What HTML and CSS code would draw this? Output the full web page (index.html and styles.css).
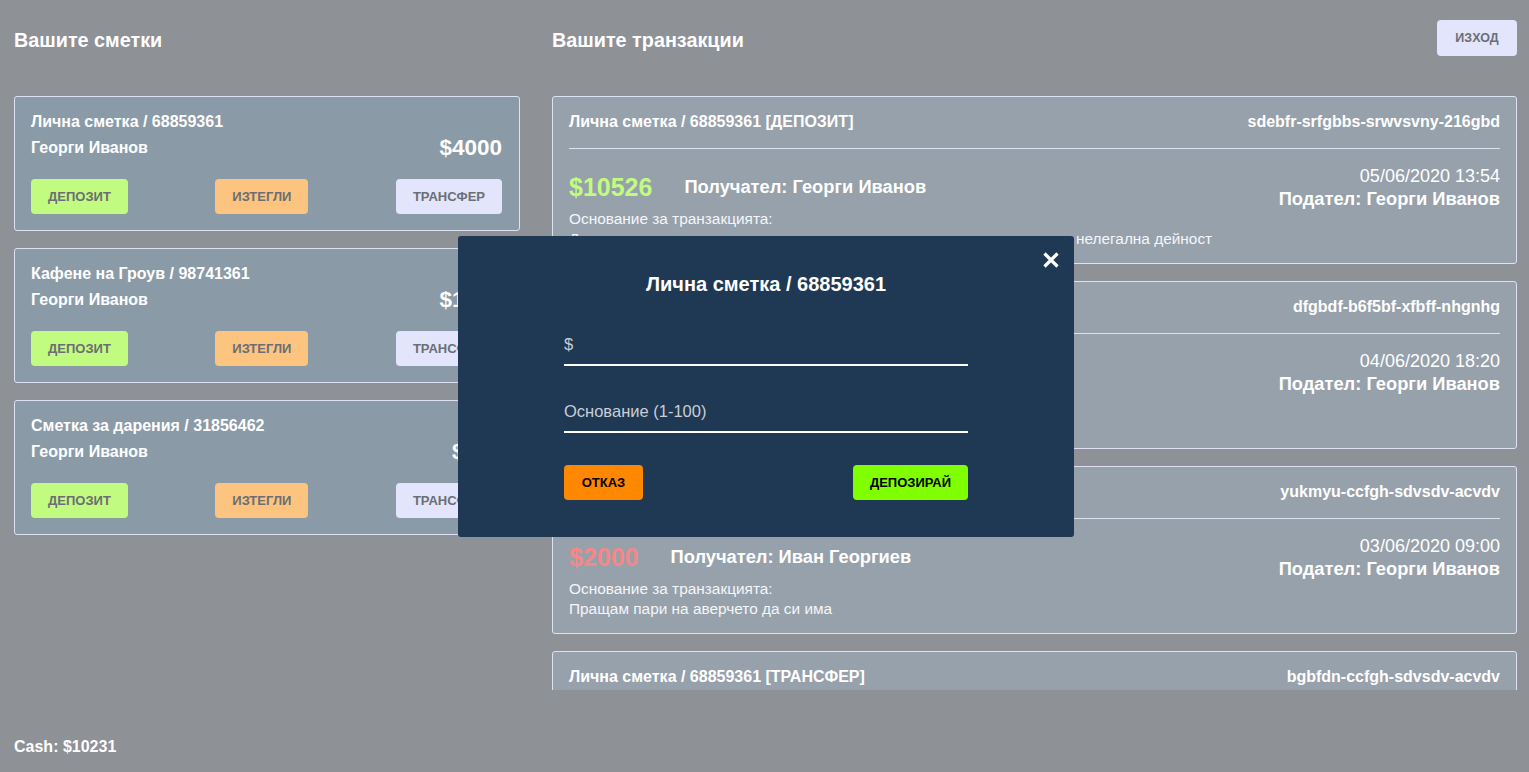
FILE: index.html
```html
<!DOCTYPE html>
<html lang="bg">
<head>
<meta charset="utf-8">
<title>Банка</title>
<link rel="stylesheet" href="styles.css">
</head>
<body>
<div class="page">
  <main class="columns">
    <section class="col col-accounts">
      <header class="col-head">
        <h2 class="col-title">Вашите сметки</h2>
      </header>
      <div class="account-list">
        <article class="account">
          <div class="account-title">Лична сметка / 68859361</div>
          <div class="account-row">
            <span class="account-owner">Георги Иванов</span>
            <span class="account-balance">$4000</span>
          </div>
          <div class="account-actions">
            <button class="btn btn-green">Депозит</button>
            <button class="btn btn-orange">Изтегли</button>
            <button class="btn btn-lav">Трансфер</button>
          </div>
        </article>
        <article class="account">
          <div class="account-title">Кафене на Гроув / 98741361</div>
          <div class="account-row">
            <span class="account-owner">Георги Иванов</span>
            <span class="account-balance">$1900</span>
          </div>
          <div class="account-actions">
            <button class="btn btn-green">Депозит</button>
            <button class="btn btn-orange">Изтегли</button>
            <button class="btn btn-lav">Трансфер</button>
          </div>
        </article>
        <article class="account">
          <div class="account-title">Сметка за дарения / 31856462</div>
          <div class="account-row">
            <span class="account-owner">Георги Иванов</span>
            <span class="account-balance">$500</span>
          </div>
          <div class="account-actions">
            <button class="btn btn-green">Депозит</button>
            <button class="btn btn-orange">Изтегли</button>
            <button class="btn btn-lav">Трансфер</button>
          </div>
        </article>
      </div>
    </section>

    <section class="col col-tx">
      <header class="col-head">
        <h2 class="col-title">Вашите транзакции</h2>
        <button class="btn btn-lav btn-logout">Изход</button>
      </header>
      <div class="tx-list">
        <article class="tx">
          <div class="tx-head">
            <span>Лична сметка / 68859361 [ДЕПОЗИТ]</span>
            <span>sdebfr-srfgbbs-srwvsvny-216gbd</span>
          </div>
          <div class="tx-main">
            <div class="tx-left">
              <span class="tx-amount tx-plus">$10526</span>
              <span class="tx-party">Получател: Георги Иванов</span>
            </div>
            <div class="tx-right">
              <span class="tx-date">05/06/2020 13:54</span>
              <span class="tx-party">Подател: Георги Иванов</span>
            </div>
          </div>
          <div class="tx-desc">
            <div>Основание за транзакцията:</div>
            <div>Депозирам пари намерени на улицата, които са с вероятност да са от нелегална дейност</div>
          </div>
        </article>
        <article class="tx">
          <div class="tx-head">
            <span>Лична сметка / 68859361 [ИЗТЕГЛЯНЕ]</span>
            <span>dfgbdf-b6f5bf-xfbff-nhgnhg</span>
          </div>
          <div class="tx-main">
            <div class="tx-left">
              <span class="tx-amount tx-minus">$500</span>
              <span class="tx-party">Получател: Георги Иванов</span>
            </div>
            <div class="tx-right">
              <span class="tx-date">04/06/2020 18:20</span>
              <span class="tx-party">Подател: Георги Иванов</span>
            </div>
          </div>
          <div class="tx-desc">
            <div>Основание за транзакцията:</div>
            <div>Теглене на пари в брой</div>
          </div>
        </article>
        <article class="tx">
          <div class="tx-head">
            <span>Лична сметка / 68859361 [ТРАНСФЕР]</span>
            <span>yukmyu-ccfgh-sdvsdv-acvdv</span>
          </div>
          <div class="tx-main">
            <div class="tx-left">
              <span class="tx-amount tx-minus">$2000</span>
              <span class="tx-party">Получател: Иван Георгиев</span>
            </div>
            <div class="tx-right">
              <span class="tx-date">03/06/2020 09:00</span>
              <span class="tx-party">Подател: Георги Иванов</span>
            </div>
          </div>
          <div class="tx-desc">
            <div>Основание за транзакцията:</div>
            <div>Пращам пари на аверчето да си има</div>
          </div>
        </article>
        <article class="tx">
          <div class="tx-head">
            <span>Лична сметка / 68859361 [ТРАНСФЕР]</span>
            <span>bgbfdn-ccfgh-sdvsdv-acvdv</span>
          </div>
          <div class="tx-main">
            <div class="tx-left">
              <span class="tx-amount tx-minus">$1000</span>
              <span class="tx-party">Получател: Иван Георгиев</span>
            </div>
            <div class="tx-right">
              <span class="tx-date">02/06/2020 10:00</span>
              <span class="tx-party">Подател: Георги Иванов</span>
            </div>
          </div>
          <div class="tx-desc">
            <div>Основание за транзакцията:</div>
            <div>Заем</div>
          </div>
        </article>
      </div>
    </section>
  </main>
  <footer class="cash">Cash: $10231</footer>
</div>

<div class="overlay">
  <div class="modal">
    <button class="modal-close" aria-label="Затвори">
      <svg width="18" height="18" viewBox="0 0 18 18"><path d="M2.5 2.5 L15.5 15.5 M15.5 2.5 L2.5 15.5" stroke="#ffffff" stroke-width="3.2" stroke-linecap="butt" fill="none"/></svg>
    </button>
    <h3 class="modal-title">Лична сметка / 68859361</h3>
    <form class="modal-form">
      <input class="field" type="text" placeholder="$">
      <input class="field" type="text" placeholder="Основание (1-100)">
      <div class="modal-actions">
        <button type="button" class="btn btn-cancel">Отказ</button>
        <button type="button" class="btn btn-confirm">Депозирай</button>
      </div>
    </form>
  </div>
</div>
</body>
</html>
```
FILE: styles.css
```css
* { box-sizing: border-box; }

html, body {
  margin: 0;
  padding: 0;
  height: 100%;
}

body {
  background: #8e9196;
  font-family: "Liberation Sans", Arial, sans-serif;
  color: #ffffff;
  overflow: hidden;
}

.page {
  height: 100vh;
  display: flex;
  flex-direction: column;
}

.columns {
  display: grid;
  grid-template-columns: 506px 1fr;
  column-gap: 32px;
  padding: 0 12px 0 14px;
  height: 690px;
}

.col {
  display: flex;
  flex-direction: column;
  min-height: 0;
}

.col-head {
  height: 78px;
  margin-bottom: 18px;
  display: flex;
  align-items: center;
  justify-content: space-between;
  padding-top: 2px;
}

.col-title {
  margin: 0;
  font-size: 19.8px;
  font-weight: bold;
  line-height: 24px;
}

/* Buttons */
.btn {
  font-family: "Liberation Sans", Arial, sans-serif;
  border: none;
  border-radius: 4px;
  height: 35px;
  padding: 0 17px;
  font-size: 13px;
  font-weight: bold;
  text-transform: uppercase;
  color: #6b6e74;
  cursor: pointer;
}

.btn-green { background: #c1fb80; }
.btn-orange { background: #fdc47f; }
.btn-lav { background: #e2e5fb; }

.btn-logout {
  width: 80px;
  height: 36px;
  padding: 0;
  font-size: 12.5px;
  margin-top: -4px;
}

/* Accounts */
.account-list {
  display: flex;
  flex-direction: column;
  gap: 17px;
}

.account {
  background: #8b9aa7;
  border: 1px solid #dde1f6;
  border-radius: 3px;
  padding: 16px 17px 16px 16px;
}

.account-title {
  font-size: 16px;
  font-weight: bold;
  line-height: 18px;
}

.account-row {
  display: flex;
  justify-content: space-between;
  align-items: center;
  height: 30px;
  margin-top: 2px;
}

.account-owner {
  font-size: 16px;
  font-weight: bold;
}

.account-balance {
  font-size: 22.5px;
  font-weight: bold;
}

.account-actions {
  display: flex;
  justify-content: space-between;
  margin-top: 16px;
}

/* Transactions */
.tx-list {
  display: flex;
  flex-direction: column;
  gap: 17px;
  overflow: hidden;
  flex: 1;
  min-height: 0;
}

.tx {
  flex-shrink: 0;
  background: #97a1ab;
  border: 1px solid #dde1f6;
  border-radius: 3px;
  padding: 16px 16px 14px 16px;
}

.tx-head {
  display: flex;
  justify-content: space-between;
  font-size: 16px;
  font-weight: bold;
  line-height: 18px;
  padding-bottom: 17px;
  border-bottom: 1px solid #dde1f6;
}

.tx-main {
  display: flex;
  justify-content: space-between;
  align-items: center;
  height: 44px;
  margin-top: 16px;
}

.tx-left {
  display: flex;
  align-items: center;
  gap: 32px;
}

.tx-right {
  display: flex;
  flex-direction: column;
  align-items: flex-end;
  gap: 3px;
}

.tx-amount {
  font-size: 25px;
  font-weight: bold;
}

.tx-plus { color: #c1fb80; }
.tx-minus { color: #f48888; }

.tx-party {
  font-size: 18.3px;
  font-weight: bold;
  line-height: 20px;
}

.tx-date {
  font-size: 18px;
  line-height: 20px;
}

.tx-desc {
  font-size: 15.4px;
  line-height: 20px;
  color: #f4f6fa;
}

/* Footer */
.cash {
  margin-top: auto;
  padding: 0 14px 16px;
  font-size: 16px;
  font-weight: bold;
  line-height: 18px;
}

/* Modal */
.overlay {
  position: fixed;
  inset: 0;
  display: flex;
  align-items: center;
  justify-content: center;
  padding-left: 3px;
}

.modal {
  position: relative;
  width: 616px;
  background: #1f3853;
  border-radius: 3px;
  padding: 36px 106px 37px;
}

.modal-close {
  position: absolute;
  top: 15px;
  right: 14px;
  width: 18px;
  height: 18px;
  padding: 0;
  border: none;
  background: none;
  cursor: pointer;
  display: flex;
}

.modal-title {
  margin: 0;
  text-align: center;
  font-size: 20px;
  font-weight: bold;
  line-height: 24px;
}

.modal-form {
  display: flex;
  flex-direction: column;
  margin-top: 34px;
}

.field {
  display: block;
  width: 100%;
  height: 36px;
  padding: 4px 0 8px;
  background: transparent;
  border: none;
  border-bottom: 2px solid #ffffff;
  color: #ffffff;
  font-family: "Liberation Sans", Arial, sans-serif;
  font-size: 16.5px;
  line-height: 22px;
  outline: none;
}

.field::placeholder {
  color: #c9ced6;
  opacity: 1;
}

.field + .field {
  margin-top: 31px;
}

.modal-actions {
  display: flex;
  justify-content: space-between;
  margin-top: 32px;
}

.btn-cancel {
  background: #ff8800;
  color: #000000;
  width: 79px;
  padding: 0;
}

.btn-confirm {
  background: #80ff00;
  color: #000000;
  width: 115px;
  padding: 0;
}
```
